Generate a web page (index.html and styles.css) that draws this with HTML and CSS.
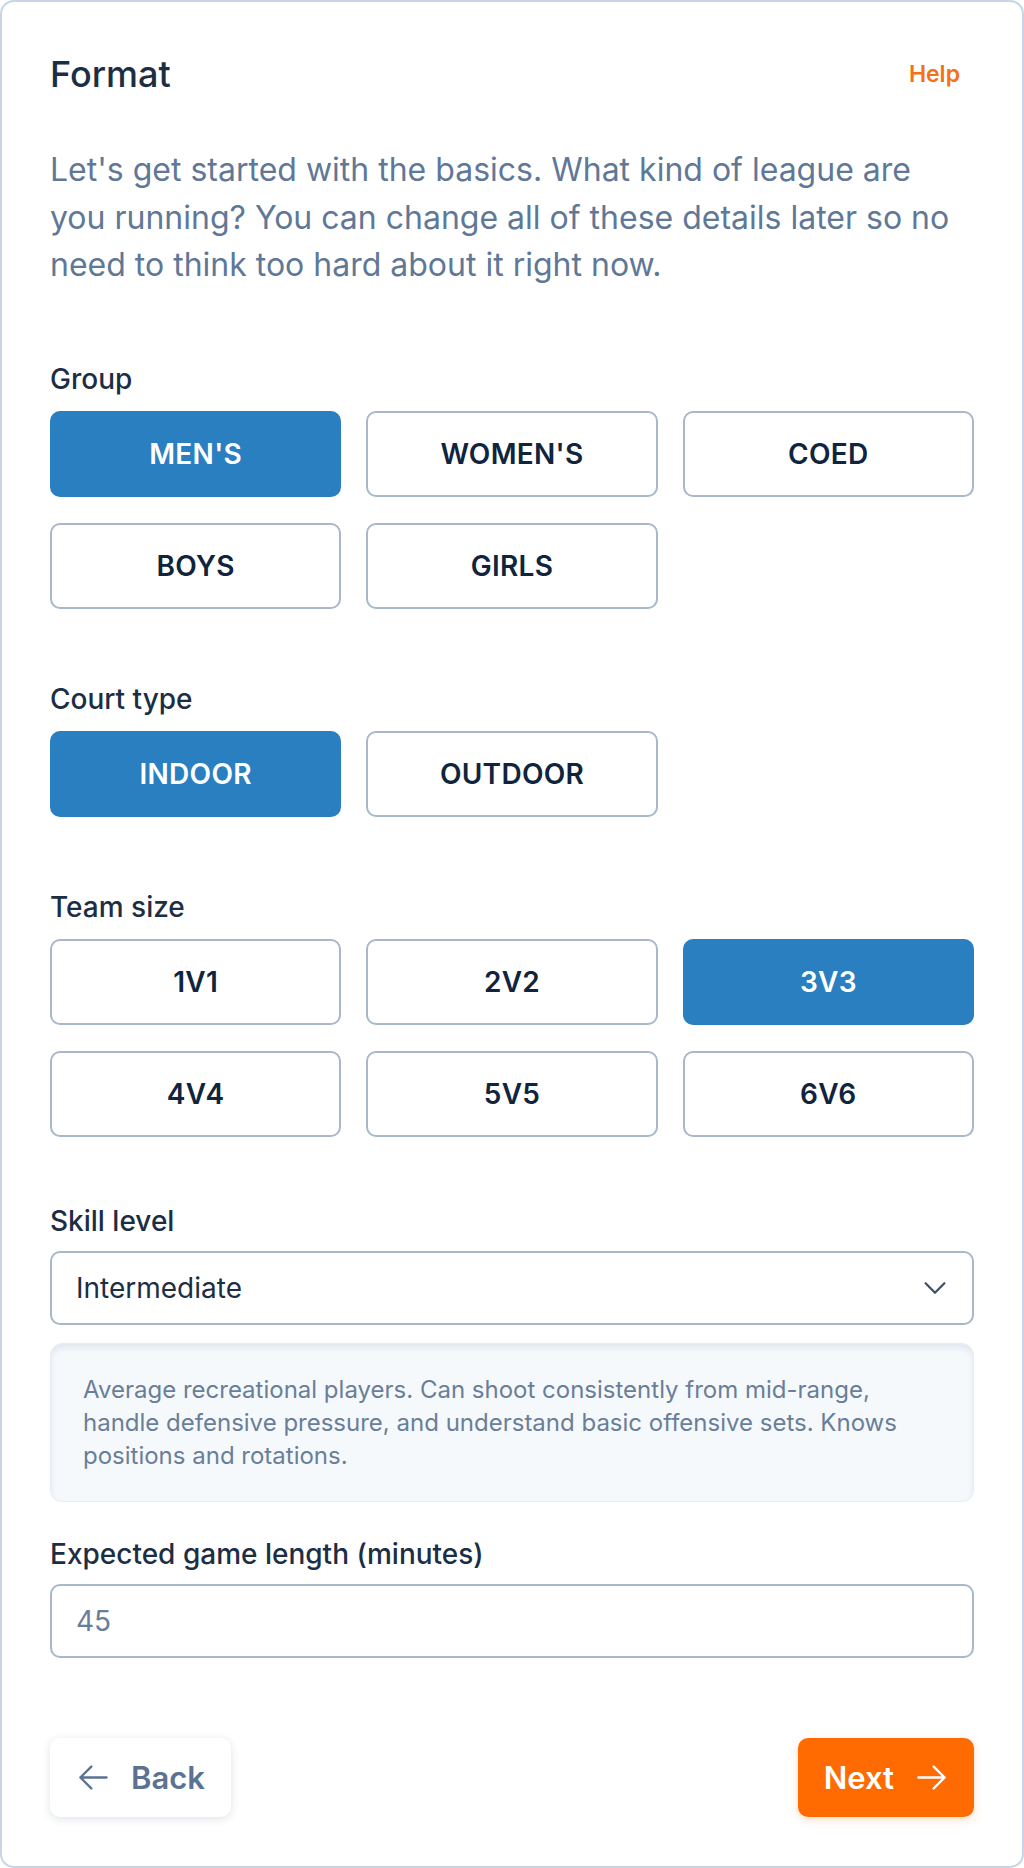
FILE: index.html
```html
<!DOCTYPE html>
<html lang="en">
<head>
<meta charset="utf-8">
<title>Format</title>
<link rel="stylesheet" href="styles.css">
</head>
<body>
<div class="card">
  <header class="head">
    <h1 class="title">Format</h1>
    <a class="help">Help</a>
  </header>
  <p class="intro">Let's get started with the basics. What kind of league are you running? You can change all of these details later so no need to think too hard about it right now.</p>

  <section class="section first">
    <div class="label">Group</div>
    <div class="choices">
      <button class="choice selected">MEN'S</button>
      <button class="choice">WOMEN'S</button>
      <button class="choice">COED</button>
      <button class="choice">BOYS</button>
      <button class="choice">GIRLS</button>
    </div>
  </section>

  <section class="section">
    <div class="label">Court type</div>
    <div class="choices">
      <button class="choice selected">INDOOR</button>
      <button class="choice">OUTDOOR</button>
    </div>
  </section>

  <section class="section">
    <div class="label">Team size</div>
    <div class="choices">
      <button class="choice">1V1</button>
      <button class="choice">2V2</button>
      <button class="choice selected">3V3</button>
      <button class="choice">4V4</button>
      <button class="choice">5V5</button>
      <button class="choice">6V6</button>
    </div>
  </section>

  <section class="section skill">
    <div class="label">Skill level</div>
    <div class="select">
      <span>Intermediate</span>
      <svg class="chev" viewBox="0 0 24 24" fill="none" stroke="currentColor" stroke-width="1.8" stroke-linecap="round" stroke-linejoin="round"><path d="m19.5 8.25-7.5 7.5-7.5-7.5"/></svg>
    </div>
    <div class="desc">Average recreational players. Can shoot consistently from mid-range, handle defensive pressure, and understand basic offensive sets. Knows positions and rotations.</div>
  </section>

  <section class="section length">
    <div class="label">Expected game length (minutes)</div>
    <div class="input">45</div>
  </section>

  <footer class="foot">
    <button class="btn back">
      <svg class="arrow" viewBox="0 0 24 24" fill="none" stroke="currentColor" stroke-width="1.6" stroke-linecap="round" stroke-linejoin="round"><path d="M10.5 19.5 3 12m0 0 7.5-7.5M3 12h18"/></svg>
      <span>Back</span>
    </button>
    <button class="btn next">
      <span>Next</span>
      <svg class="arrow" viewBox="0 0 24 24" fill="none" stroke="currentColor" stroke-width="1.6" stroke-linecap="round" stroke-linejoin="round"><path d="M13.5 4.5 21 12m0 0-7.5 7.5M21 12H3"/></svg>
    </button>
  </footer>
</div>
</body>
</html>
```
FILE: styles.css
```css
* { box-sizing: border-box; }
html, body { margin: 0; padding: 0; background: #ffffff; }
body { font-family: Inter, "Noto Sans", "Liberation Sans", sans-serif; }

.card {
  width: 1024px;
  height: 1868px;
  padding: 50px 48px;
  border: 2px solid #c9d5e4;
  border-radius: 14px;
  background: #ffffff;
}

.head {
  display: flex;
  justify-content: space-between;
  align-items: center;
  height: 44px;
}
.title {
  margin: 0;
  font-size: 36px;
  font-weight: 500;
  line-height: 44px;
  color: #1c2e44;
}
.help {
  padding: 0 14px;
  font-size: 23px;
  font-weight: 600;
  color: #f47216;
}

.intro {
  margin: 50px 0 0;
  max-width: 910px;
  font-size: 32px;
  line-height: 47.6px;
  color: #5f7897;
}

.section { margin-top: 70px; }
.section.skill { margin-top: 64px; }
.section.length { margin-top: 32px; }

.label {
  font-size: 28px;
  font-weight: 500;
  line-height: 40px;
  color: #1c2e44;
}

.choices {
  margin-top: 12px;
  display: grid;
  grid-template-columns: repeat(3, 1fr);
  column-gap: 25px;
  row-gap: 26px;
}
.choice {
  height: 86px;
  border: 2px solid #a8b7ca;
  border-radius: 10px;
  background: #ffffff;
  font-family: inherit;
  font-size: 28px;
  font-weight: 600;
  letter-spacing: 0.3px;
  color: #10243d;
}
.choice.selected {
  background: #2a7fc1;
  border-color: #2a7fc1;
  color: #ffffff;
}

.select, .input {
  margin-top: 10px;
  height: 74px;
  border: 2px solid #a8b7ca;
  border-radius: 10px;
  padding: 0 24px;
  display: flex;
  align-items: center;
  font-size: 28px;
}
.select {
  justify-content: space-between;
  padding-right: 22px;
  color: #1c2e44;
}
.chev { width: 30px; height: 30px; color: #3d5068; }
.input { color: #687d97; }

.desc {
  margin-top: 18px;
  padding: 29px 32px;
  border: 1px solid #e6edf4;
  border-radius: 12px;
  background: #f6f9fc;
  box-shadow: inset 0 4px 6px rgba(110, 135, 165, 0.16);
  font-size: 24px;
  line-height: 33px;
  color: #697e98;
}

.foot {
  margin-top: 80px;
  display: flex;
  justify-content: space-between;
}
.btn {
  height: 79px;
  border: none;
  border-radius: 10px;
  display: flex;
  align-items: center;
  gap: 20px;
  font-family: inherit;
  font-size: 31px;
  font-weight: 600;
}
.btn .arrow { width: 35px; height: 35px; }
.back {
  padding: 0 26px 0 26px;
  background: #ffffff;
  color: #5b7391;
  box-shadow: 0 2px 8px rgba(30, 50, 80, 0.14);
}
.next {
  padding: 0 25px 0 26px;
  background: #ff6b00;
  color: #ffffff;
  box-shadow: 0 3px 8px rgba(255, 107, 0, 0.22);
}
```
